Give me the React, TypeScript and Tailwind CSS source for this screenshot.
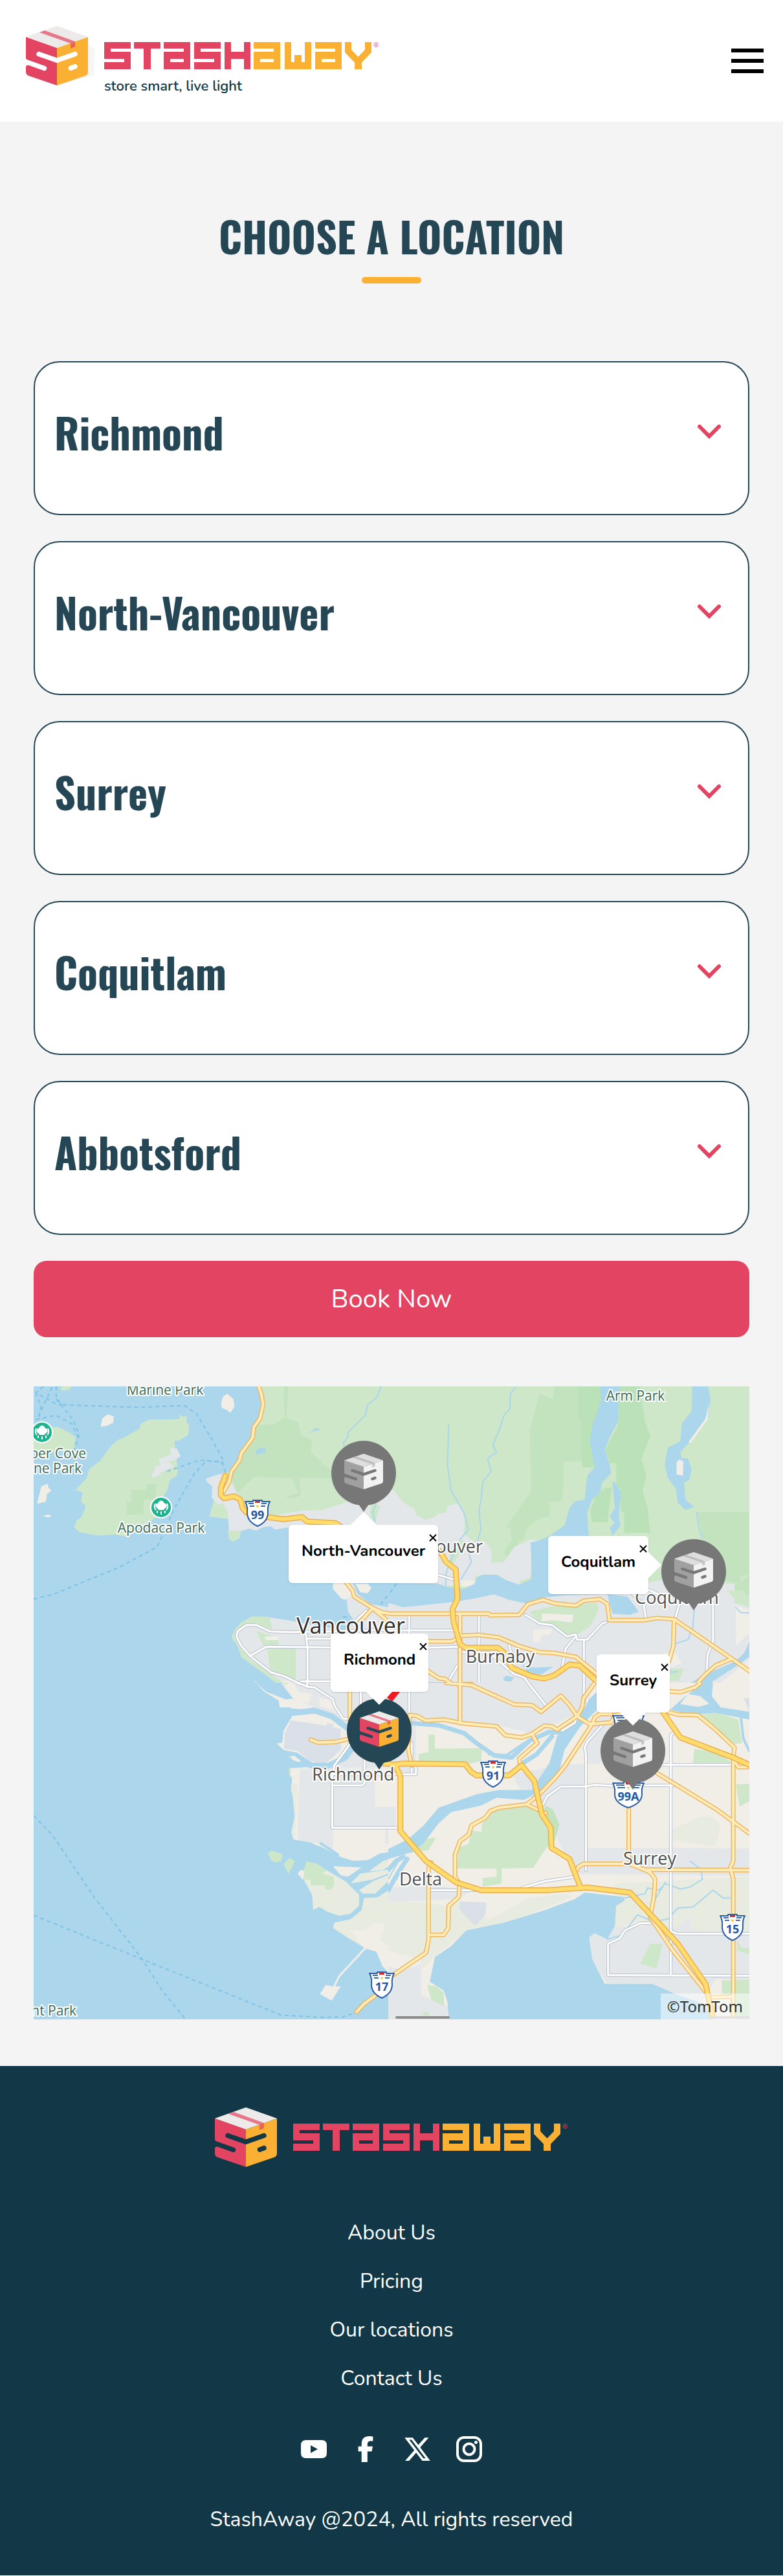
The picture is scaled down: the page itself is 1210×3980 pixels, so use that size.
import { useId, useState } from "react";
import type { ReactNode } from "react";
import { FaFacebookF, FaXTwitter } from "react-icons/fa6";

const locations = ["Richmond", "North-Vancouver", "Surrey", "Coquitlam", "Abbotsford"];
const footerLinks = ["About Us", "Pricing", "Our locations", "Contact Us"];

/* ---------- Brand ---------- */

type CubeColors = { left: string; right: string; top: string; tape: string; fold: string };

const brandCube: CubeColors = {
  left: "#e24462",
  right: "#fab033",
  top: "#edebe9",
  tape: "#e7788a",
  fold: "#ee6158",
};

const grayCube: CubeColors = {
  left: "#a0a0a0",
  right: "#f2f2f2",
  top: "#dedede",
  tape: "#bdbdbd",
  fold: "#c6c6c6",
};

function Cube({
  colors,
  gap,
  className,
  stretch,
}: {
  colors: CubeColors;
  gap: string;
  className: string;
  stretch?: boolean;
}) {
  return (
    <svg
      viewBox="0 0 96 92"
      preserveAspectRatio={stretch ? "none" : "xMidYMid meet"}
      className={className}
      aria-hidden="true"
    >
      <path d="M0 17 48 34V92L4 77Q0 75 0 71Z" fill={colors.left} />
      <path d="M96 17 48 34V92L92 77Q96 75 96 71Z" fill={colors.right} />
      <path d="M48 0 96 17 48 34 0 17Z" fill={colors.top} />
      <path d="M21 10 29 7 76 24 69 27Z" fill={colors.tape} />
      <path d="M69 27 76 24V32L69 35Z" fill={colors.fold} />
      <g fill="none" stroke={gap} strokeWidth="7.4" strokeLinecap="round">
        <path d="M20 43.5 48 53.3 76 43.5" />
        <path d="M-4 54 28.500 65.500" />
        <path d="M69.500 65.300 76 62.800" />
      </g>
      <path d="M-1 48 0 50Q.5 52 4 53.500L-1 54ZM-1 65 0 63Q.5 60 4 60.800L0 58H-1Z" fill={gap} />
    </svg>
  );
}

const markS = (x: number) => (
  <g key={`s${x}`} transform={`translate(${x} 0)`}>
    <rect width="41" height="10" />
    <rect width="10" height="26" />
    <rect y="15" width="41" height="11" />
    <rect x="31" y="15" width="10" height="27" />
    <rect y="31" width="41" height="11" />
  </g>
);

const markA = (x: number) => (
  <g key={`a${x}`} transform={`translate(${x} 0)`}>
    <rect width="41" height="10" />
    <rect x="31" width="10" height="42" />
    <rect y="15" width="41" height="11" />
    <rect y="15" width="10" height="27" />
    <rect y="31" width="41" height="11" />
  </g>
);

function Wordmark() {
  return (
    <svg viewBox="0 0 425 42" className="h-[42px] w-[425px] overflow-visible" role="img" aria-label="StashAway">
      <g fill="#e24462">
        {markS(0)}
        <rect x="46" width="41" height="10" />
        <rect x="61" width="11" height="42" />
        {markA(92)}
        {markS(139)}
        <rect x="186" width="10" height="42" />
        <rect x="216" width="10" height="42" />
        <rect x="186" y="15" width="40" height="11" />
        <text x="416" y="8" fontSize="10" fontFamily="Nunito, sans-serif">
          ®
        </text>
      </g>
      <g fill="#fab033">
        {markA(231)}
        <rect x="279" width="10" height="42" />
        <rect x="310" width="10" height="42" />
        <rect x="279" y="31" width="41" height="11" />
        <rect x="294" y="20" width="11" height="22" />
        {markA(326)}
        <rect x="387" y="29" width="11" height="13" />
        <polyline points="377,0 377,14 392.5,30 408,14 408,0" fill="none" stroke="#fab033" strokeWidth="10" />
      </g>
    </svg>
  );
}

/* ---------- Map artwork ---------- */

const WATER = "#abd6ec";
const GREEN = "#cde7c8";
const FOREST = "#c3e3be";
const URBAN = "#e3e7ea";
const BEIGE = "#f1eee8";
const FARM = "#e8ebdf";

function Areas({ fill, shapes }: { fill: string; shapes: string[] }) {
  return (
    <g fill={fill}>
      {shapes.map((points) => (
        <polygon key={points} points={points} />
      ))}
    </g>
  );
}

function Lines({
  stroke,
  width,
  dash,
  lines,
}: {
  stroke: string;
  width: number;
  dash?: string;
  lines: string[];
}) {
  return (
    <g fill="none" stroke={stroke} strokeWidth={width} strokeDasharray={dash} strokeLinejoin="round" strokeLinecap={dash ? "butt" : "round"}>
      {lines.map((points) => (
        <polyline key={points} points={points} vectorEffect="non-scaling-stroke" />
      ))}
    </g>
  );
}

function Roads({ local, main, highway }: { local: string[]; main: string[]; highway: string[] }) {
  return (
    <>
      <Lines stroke="#b7bfcb" width={5} lines={local} />
      <Lines stroke="#ffffff" width={3} lines={local} />
      <Lines stroke="#efb55c" width={7} lines={main} />
      <Lines stroke="#ffecb8" width={4} lines={main} />
      <Lines stroke="#ecac4c" width={9} lines={highway} />
      <Lines stroke="#ffdc6c" width={6} lines={highway} />
    </>
  );
}

function Tile({ x, y, w, h, view, children }: { x: number; y: number; w: number; h: number; view: string; children: ReactNode }) {
  return (
    <svg x={x} y={y} width={w} height={h} viewBox={view} preserveAspectRatio="none">
      {children}
    </svg>
  );
}

const FERRY = "#7cc3e8";

function HoweSound() {
  return (
    <Tile x={0} y={0} w={548} h={458} view="31 36 1432 1374">
      <Areas
        fill={GREEN}
        shapes={[
          "30,235 60,222 130,225 172,248 200,270 195,320 170,345 140,335 30,345",
          "135,48 150,36 182,36 178,50 150,56",
          "200,515 245,462 255,420 300,380 345,310 375,282 405,268 460,230 462,210 495,190 600,188 620,186 620,168 640,176 650,172 648,195 660,220 655,262 620,285 600,290 612,420 612,447 582,470 570,520 545,560 555,600 530,640 490,670 440,710 400,732 360,722 290,728 215,712 195,690 203,660 225,640 242,590 222,570 228,527",
          "940,36 950,70 958,120 945,185 920,225 905,280 870,340 845,395 825,430 790,440 740,640 1100,690 1463,690 1463,36",
        ]}
      />
      <Areas
        fill={FOREST}
        shapes={[
          "425,515 487,515 487,487 525,490 525,550 515,560 475,560 475,630 405,630 405,570 425,570",
          "1060,36 1050,180 1100,205 1110,260 1155,285 1150,340 1205,400 1240,435 1250,462 1105,462 1110,540 1085,555 1045,550 1100,530 1075,462 920,455 850,535 830,460 850,400 900,290 920,215 1000,212 1045,180 1040,36",
        ]}
      />
      <Areas
        fill={URBAN}
        shapes={[
          "535,375 585,350 580,318 610,325 624,360 600,378 575,385 598,408 560,425 520,460 505,452 525,405 545,402",
          "725,465 760,450 790,440 825,470 855,535 885,590 1000,635 1110,612 1200,608 1300,570 1335,560 1463,520 1463,690 1060,690 1005,700 990,685 960,688 930,705 900,695 860,710 820,708 815,620 795,575 775,585 750,550 752,500 730,478",
          "910,1103 960,1103 1060,1120 1190,1150 1290,1165 1330,1130 1300,1080 1295,1020 1275,1020 1240,975 1240,948 1320,948 1340,1000 1390,1045 1463,1060 1463,1410 1010,1410 960,1365 910,1325 870,1290 850,1225 830,1200 845,1160 870,1130",
        ]}
      />
      <Areas
        fill={GREEN}
        shapes={[
          "815,705 868,705 862,740 835,757 820,745",
          "845,1225 830,1200 845,1160 870,1130 910,1103 960,1103 985,1110 995,1165 930,1142 890,1145 852,1180 860,1220",
          "975,1255 1090,1250 1090,1395 1040,1380 985,1345",
          "930,1170 985,1190 1020,1200 1020,1235 960,1240",
          "1390,575 1430,590 1410,665 1390,650",
          "850,1225 870,1290 910,1325 960,1365 1010,1410 1040,1410 985,1365 905,1300",
        ]}
      />
      <Areas
        fill={BEIGE}
        shapes={[
          "302,222 308,185 330,166 355,175 352,205 325,220",
          "788,115 795,85 812,70 838,95 842,130 825,160 815,148 790,135",
          "45,580 62,500 88,487 90,505 103,518 85,535 80,570",
          "68,636 90,629 105,640 85,643",
          "1240,948 1290,948 1325,1000 1340,1025 1310,1010 1290,1025 1275,1020 1240,975",
          "1330,950 1380,950 1395,970 1380,995 1350,990",
          "1035,1400 1070,1400 1070,1410 1040,1410",
          "965,1195 1020,1195 1020,1212 965,1212",
          "920,1398 940,1415 932,1415",
        ]}
      />
      <Areas fill={WATER} shapes={["925,340 945,318 968,325 965,345 930,352", "1130,265 1165,232 1185,230 1183,240 1155,245"]} />
      <Lines stroke={WATER} width={2} lines={["1435,36 1415,90 1380,120 1370,170 1300,250 1298,275 1282,295 1285,315", "1420,560 1400,620 1410,665"]} />
      <Lines
        stroke={FERRY}
        width={2}
        dash="6 5"
        lines={[
          "122,36 122,95 155,122 450,133 640,125 690,165 750,280 800,385",
          "31,1022 110,1000 375,875 530,780 600,600 680,440 730,380 800,390",
          "570,430 700,378 790,385 808,440",
          "70,36 40,65 122,118 155,122",
          "105,40 45,190",
          "40,65 60,130 50,190",
          "40,190 120,170 185,210 210,270",
          "122,95 190,190 215,260 195,330",
          "1495,955 1430,1050",
          "1280,1105 1310,1105",
        ]}
      />
      <Roads
        local={[
          "1463,1165 1075,1175 985,1172 930,1142 890,1142 855,1170 850,1195 870,1240 905,1285 990,1362 1040,1378 1135,1430 1160,1432",
          "905,1285 970,1243 1463,1248",
          "1130,1180 1137,1250 1137,1430",
          "1137,1205 1463,1205",
          "1110,1403 1463,1403",
          "1375,1075 1330,1125",
        ]}
        main={[
          "938,30 950,70 958,120 945,185 920,225 915,275 870,345 862,380 830,430 820,480 798,525",
          "1290,940 1320,985 1325,1010 1395,1060 1440,1085 1480,1088",
          "1395,1070 1340,1140",
          "1395,1060 1463,1125",
          "1308,1400 1308,1420",
        ]}
        highway={["805,450 787,505 787,540 800,555 840,545 865,560 875,600 890,620 975,642 1040,652 1115,642 1135,662 1250,670 1290,700"]}
      />
    </Tile>
  );
}

function NorthShore() {
  return (
    <Tile x={548} y={0} w={558} h={458} view="0 36 1434 1374">
      <rect x="0" y="36" width="1434" height="1374" fill={GREEN} />
      <Areas
        fill={FOREST}
        shapes={[
          "660,36 655,95 600,70 562,240 568,520 520,600 465,690 485,690 490,750 465,790 462,820 500,820 515,760 540,740 550,690 605,645 640,640 640,572 693,568 697,384 830,384 860,36",
          "1228,618 1434,618 1434,912 1400,912 1395,948 1340,940 1250,745",
          "1434,912 1434,1000 1380,1030 1375,960 1395,948",
        ]}
      />
      <Areas
        fill="#bbe1b9"
        shapes={[
          "755,36 860,36 830,412 772,412 765,330 772,196 755,196",
          "915,36 1000,36 1010,130 1020,200 1042,265 1005,370 1025,455 1010,520 1030,600 1040,715 937,715 937,620 925,615 920,508 905,505 905,392 880,392 862,330 912,220",
          "865,505 887,505 870,665 810,665 802,610 830,530",
        ]}
      />
      <Areas
        fill={URBAN}
        shapes={[
          "0,515 20,515 60,575 105,605 110,630 150,655 185,640 200,625 230,620 235,590 275,578 295,600 305,640 300,720 345,760 380,752 410,795 410,855 460,850 500,780 565,745 640,760 640,960 0,960",
          "0,1000 640,1000 1000,950 1080,935 1120,920 1300,950 1375,950 1375,1040 1434,1060 1434,1410 0,1410",
        ]}
      />
      <Areas
        fill={GREEN}
        shapes={[
          "575,1100 560,1080 650,1055 740,1050 830,1038 835,1070 820,1110 800,1150 745,1190 700,1190 670,1160 600,1130",
          "345,915 400,905 375,940 345,950",
          "515,940 560,925 568,900 568,950 540,958",
          "1120,1345 1175,1345 1155,1400 1120,1400",
          "1345,985 1410,980 1434,1030 1385,1030",
          "240,800 285,745 315,760 250,870",
        ]}
      />
      <Areas
        fill={BEIGE}
        shapes={[
          "610,1088 735,1095 730,1130 650,1120 610,1125",
          "575,1165 650,1160 645,1185 605,1190 605,1220 575,1220",
          "1380,1050 1434,1075 1434,1180 1380,1240",
          "1320,1410 1385,1350 1434,1300 1434,1410",
          "1090,1270 1140,1270 1165,1320 1120,1340",
          "290,935 345,935 330,962 290,965",
        ]}
      />
      <Areas
        fill={WATER}
        shapes={[
          "0,948 200,950 230,965 300,975 345,950 350,925 375,910 430,908 470,935 520,955 568,930 568,830 565,760 600,750 640,730 700,680 720,600 740,570 780,560 790,450 820,410 800,290 810,220 845,100 842,36 920,36 915,90 912,200 880,270 860,330 880,400 885,440 850,480 840,530 810,560 790,620 795,720 820,760 880,1000 950,1010 995,1080 960,1095 890,1090 870,1000 860,1000 700,1005 620,1015 560,1045 480,1025 420,1000 340,1020 260,1035 180,1045 60,1060 0,1040",
          "1207,36 1270,36 1280,100 1270,180 1200,290 1160,340 1165,370 1190,370 1205,420 1195,470 1175,480 1180,560 1215,595 1180,608 1150,575 1142,510 1110,460 1098,400 1110,320 1160,290 1165,210 1185,180 1205,150",
          "890,475 905,490 925,530 915,640 922,680 890,730 880,690 900,670 880,640 900,600",
          "530,1325 580,1340 655,1335 610,1370 560,1370",
          "455,1390 470,1377 500,1385 490,1403 465,1403",
          "1434,1220 1434,1290 1380,1335 1280,1410 1200,1410 1260,1370 1380,1310 1415,1270",
        ]}
      />
      <Areas fill={BEIGE} shapes={["1145,385 1158,375 1172,385 1170,450 1145,445", "1275,110 1268,190 1200,300 1192,295 1260,185"]} />
      <Lines
        stroke={WATER}
        width={2}
        lines={[
          "240,215 235,400 250,520 300,620 318,700 285,745",
          "508,36 485,70 483,140 460,170 440,240 430,265 415,310 430,340 395,370 408,430 375,480 370,550 360,610 368,700 355,750",
          "1215,1070 1210,1150 1190,1210 1140,1228",
          "1225,620 1235,700 1248,740",
          "320,810 330,850 290,930",
          "265,790 230,900 228,960",
          "1380,1060 1400,1085 1434,1085",
          "1120,1360 1150,1360",
        ]}
      />
      <Lines stroke={FERRY} width={2} dash="6 5" lines={["32,950 0,1005"]} />
      <Roads
        local={[
          "83,1100 83,1410",
          "360,1100 360,1420",
          "0,1167 260,1167",
          "160,1247 280,1243",
          "545,1095 600,1135 650,1142 710,1195 745,1185 750,1210 790,1210 850,1135 865,1130",
          "745,1195 705,1250 690,1340",
          "777,1210 777,1480",
          "1290,1040 1290,1220 1268,1280 1265,1350",
          "1160,1030 1140,1110",
          "960,985 1015,1050 1022,1105",
          "200,910 262,932",
          "280,1268 400,1270 500,1370 540,1385 620,1510",
          "480,1235 495,1300",
          "275,1330 240,1400",
          "155,1415 240,1415",
          "1035,980 1075,1000",
        ]}
        main={[
          "0,1090 400,1090 405,1097 520,1095 555,1045 615,1025 660,1042 745,1052 775,1030 840,1022 870,1045 878,1120 1015,1120 1065,1110 1135,1115 1360,1295 1440,1360",
          "1135,1115 1132,1240 1115,1310",
          "290,1192 360,1188 440,1200 520,1240 600,1268 660,1272 745,1290 830,1370",
          "155,1218 255,1218 275,1200",
          "285,1090 285,1420",
          "150,1350 200,1388 225,1392 255,1418 330,1415 500,1505",
          "1360,1300 1300,1330 1260,1370 1210,1435",
          "830,1390 815,1420",
        ]}
        highway={[
          "205,800 230,850 268,885 275,1020 255,1070 260,1130 285,1230 305,1247 435,1247 460,1270 490,1340 570,1380 620,1390 660,1375 720,1325 760,1330 830,1405",
        ]}
      />
    </Tile>
  );
}

function GeorgiaStrait() {
  return (
    <Tile x={0} y={458} w={548} h={520} view="31 0 1432 1509">
      <Areas fill={URBAN} shapes={["1030,0 1045,25 1075,65 1120,90 1170,120 1240,145 1300,195 1340,220 1463,220 1463,0"]} />
      <Areas
        fill={BEIGE}
        shapes={[
          "930,0 970,40 1050,75 1085,70 1160,110 1130,120 1075,115 1065,110 1025,110 1020,80 960,38",
          "1040,0 1080,0 1100,40 1155,50 1140,95 1075,65",
          "1185,68 1240,75 1265,130 1185,105",
          "1070,115 1075,145 1165,135 1240,165 1300,220 1463,260 1463,760 1430,765 1380,795 1320,798 1240,770 1150,715 1080,702 1072,670 1085,600 1080,510 1070,480 1075,430 1062,405 1068,382 1140,378 1095,330 1040,300 1012,272 1035,268 1040,215 1075,150",
        ]}
      />
      <Areas fill="#dae0e8" shapes={["1070,168 1215,192 1215,180 1243,185 1240,200 1270,205 1272,300 1210,362 1150,352 1095,305 1042,297 1045,225"]} />
      <Areas
        fill={URBAN}
        shapes={["1107,385 1410,385 1410,555 1500,555 1500,655 1240,655 1240,750 1180,720 1097,705 1100,510", "1310,150 1463,130 1463,380 1240,380 1320,270", "1450,655 1463,655 1463,725 1450,720"]}
      />
      <Areas fill={FARM} shapes={["1072,453 1096,453 1097,505 1085,700 1072,670 1085,600"]} />
      <Lines
        stroke={WATER}
        width={9}
        lines={["1080,135 1165,125 1235,150 1300,205", "1035,315 1090,325 1150,370 1220,372 1290,335 1325,280 1330,240"]}
      />
      <Lines stroke={WATER} width={4} lines={["1140,725 1190,740 1260,780", "1190,720 1260,770"]} />
      <Areas fill={BEIGE} shapes={["1060,328 1085,328 1112,352 1095,355 1072,342"]} />
      <Areas
        fill={FARM}
        shapes={[
          "1120,845 1135,800 1215,840 1290,890 1345,950 1345,1000 1310,1035 1265,1045 1215,1025 1185,1005 1160,1018 1155,950 1125,890",
          "1365,965 1355,1020 1310,1060 1245,1075 1240,1100 1310,1150 1370,1190 1415,1205 1440,1270 1463,1300 1463,930 1420,962",
          "1310,900 1350,855 1463,838 1463,855 1400,882",
          "1345,930 1400,890 1463,862 1463,890 1410,945 1360,945",
          "1385,845 1440,800 1500,778 1500,800 1440,840",
        ]}
      />
      <Areas
        fill={BEIGE}
        shapes={[
          "1097,855 1110,838 1125,845 1120,885",
          "1240,822 1355,828 1300,870 1270,862",
          "1310,1110 1365,1190 1415,1205 1440,1270 1463,1300 1463,1180 1430,1155 1450,1080 1400,1080 1370,1110",
          "1187,1395 1210,1355 1245,1362 1272,1360 1235,1425",
        ]}
      />
      <Areas
        fill={GREEN}
        shapes={[
          "1132,800 1175,810 1215,840 1195,855 1243,870 1243,910 1230,928 1208,925 1208,908 1150,908 1150,885 1125,880 1122,855",
          "976,765 990,752 1037,768 1030,800 1005,805 990,795",
          "1041,812 1065,785 1086,800 1060,857",
          "1060,385 1070,380 1066,430",
          "1058,330 1072,328 1075,342",
          "1035,0 1060,0 1050,8",
        ]}
      />
      <Lines stroke={BEIGE} width={3} lines={["1370,1190 1265,1315 1245,1360"]} />
      <Lines
        stroke={FERRY}
        width={2}
        dash="6 5"
        lines={["31,595 105,680 275,960 470,1240 550,1380 645,1509", "31,1042 470,1240 1030,1490 1200,1500 1280,1498 1330,1480"]}
      />
      <Roads
        local={[
          "1095,0 1140,18 1165,20 1240,75 1245,100 1280,160 1310,162",
          "1352,0 1352,165",
          "1135,0 1135,18",
          "1367,345 1367,450 1355,460 1237,460",
          "1310,270 1285,310 1245,370 1237,410 1237,650 1500,650",
          "1237,410 1500,410",
        ]}
        main={["1308,0 1308,190", "1150,255 1180,268 1250,265 1310,250", "1335,1475 1365,1440 1420,1395"]}
        highway={["1440,360 1480,365"]}
      />
    </Tile>
  );
}

function FraserValley() {
  return (
    <Tile x={548} y={458} w={558} h={520} view="0 0 1434 1509">
      <rect width="1434" height="1509" fill={BEIGE} />
      <Areas
        fill={URBAN}
        shapes={[
          "0,0 830,0 760,130 640,200 580,230 430,190 110,150 110,390 60,410 0,380",
          "490,410 700,365 780,365 780,740 690,740 650,650 600,540 520,470",
          "690,740 1434,742 1434,865 740,858",
          "0,555 30,555 30,640 0,650",
          "800,1130 900,1080 960,1100 1434,1000 1434,1330 1300,1330 1240,1440 1050,1350 870,1350 810,1250",
          "0,920 160,900 330,935 270,970 0,985",
          "840,140 900,140 900,240 840,365 780,365 780,280",
          "0,1270 60,1290 130,1260 130,1400 235,1450 235,1509 0,1509",
        ]}
      />
      <Areas
        fill={FARM}
        shapes={[
          "0,980 130,985 240,1000 290,980 400,1060 560,965 700,945 730,960 600,1020 460,1075 320,1105 260,1160 200,1210 130,1290 130,1240 0,1200",
          "900,900 1434,870 1434,1120 1200,1110 1200,1040 1150,1100 1000,1070 900,1100",
          "1130,655 1240,600 1290,600 1320,640 1300,735 1210,720 1130,705",
        ]}
      />
      <Areas
        fill={GREEN}
        shapes={[
          "330,660 370,670 372,630 400,600 430,560 550,550 610,590 650,710 615,760 575,830 450,832 450,900 375,915 375,875 430,870 430,832 272,832 280,740 320,720",
          "1005,1250 1040,1170 1090,1170 1065,1280 1035,1270 1000,1260",
          "1235,145 1310,135 1390,165 1405,270 1370,275 1310,230",
          "1215,297 1300,310 1370,360 1210,360",
          "155,1355 190,1360 220,1390 222,1450 170,1420",
          "120,320 160,310 160,232 185,232 185,295 370,293 370,350 285,372 120,372",
          "75,765 130,705 190,692 160,750",
          "1380,455 1434,453 1434,530 1395,555",
          "1325,1335 1434,1330 1434,1509 1380,1509 1380,1395 1325,1395",
          "1385,1155 1405,1190 1434,1190 1434,1215 1385,1200",
          "140,1475 162,1475 162,1492 140,1492",
        ]}
      />
      <Areas fill={FOREST} shapes={["625,550 655,570 680,635 660,710 645,710 640,640 612,590"]} />
      <Areas fill="#dae0e8" shapes={["283,980 390,985 385,1040 345,1090 310,1050 283,1015", "1413,70 1434,70 1434,130"]} />
      <Areas
        fill={WATER}
        shapes={[
          "780,940 930,960 940,975 905,1000 900,1090 870,1150 820,1122 798,1140 810,1240 860,1350 1050,1350 1130,1390 1250,1440 1290,1509 240,1509 235,1430 220,1380 165,1340 185,1230 250,1180 310,1110 460,1075 620,1020 740,970",
          "0,745 80,700 140,640 200,560 350,500 440,480 570,480 640,360 670,240 760,150 800,70 830,40 830,120 760,200 700,300 680,390 610,480 540,525 430,515 370,550 250,580 200,630 140,720 90,760 0,790",
          "1120,120 1180,60 1250,0 1290,0 1285,60 1320,110 1434,130 1434,165 1300,135 1200,145",
        ]}
      />
      <Areas fill={BEIGE} shapes={["1160,95 1190,50 1240,60 1275,95 1230,108"]} />
      <Lines
        stroke={WATER}
        width={7}
        lines={["80,180 200,190 300,225 350,270 420,325 490,335 560,260 640,220 700,225", "0,930 40,850 75,790", "520,370 590,320 650,240", "0,840 30,800 60,780"]}
      />
      <Lines stroke={WATER} width={4} lines={["1400,150 1410,250 1434,305", "400,320 470,325 540,270"]} />
      <Lines
        stroke={WATER}
        width={2}
        lines={[
          "900,965 940,965 1020,945 1030,920 1075,930 1100,900 1160,925 1200,915 1248,880 1240,835 1200,800",
          "870,1150 930,1130 990,1040 1050,1070 1110,1060 1150,1010 1210,1005 1290,930 1330,965 1360,965",
          "0,880 40,800",
          "1060,970 1100,895",
        ]}
      />
      <Roads
        local={[
          "83,0 83,150",
          "110,370 110,410 0,410",
          "93,270 93,400",
          "0,650 45,650",
          "777,0 777,90",
          "785,840 785,320 780,290 790,265 850,190",
          "690,215 740,180 750,150",
          "1122,1310 1122,235 1130,225",
          "1085,368 1370,368",
          "615,545 630,510 685,465 780,465 820,457 890,462",
          "1015,460 1140,460",
          "165,930 380,930",
          "530,920 620,890 740,870",
          "1040,1078 1000,1078 940,1110 920,1145 873,1170 873,1310 1434,1314",
          "1122,1115 1150,1125 1434,1125",
          "555,0 625,100",
        ]}
        main={[
          "85,145 110,147 150,170 220,165 300,182 430,195 465,235 530,245 570,230 620,192 650,195 670,210 750,150",
          "285,0 285,180",
          "230,0 330,10 500,97 570,100 607,130 685,58 720,100 750,150 800,185 885,178 900,145 950,135",
          "820,0 775,70 770,110 750,150",
          "85,145 80,300 93,370",
          "570,230 592,270 550,310 520,340 525,370",
          "885,140 840,140 820,155 810,185 700,375 660,430 600,500 550,545 440,560 405,575 385,605 330,640 320,680 285,710 265,770 265,870 283,900 280,960 240,1000 238,1100 220,1130 165,1130",
          "170,805 160,830 160,1150 150,1210 0,1325",
          "550,545 625,585",
          "955,560 955,780 1000,830 1040,850 1060,880 1055,960 1040,1050 1130,1200 1250,1370 1275,1410 1365,1407",
          "740,860 755,825 775,812 955,812 1020,838 1434,840",
          "1060,400 1300,565 1434,675",
          "1370,340 1370,800 1358,830 1370,880 1370,1495",
          "1115,132 1150,142 1230,145 1300,210 1375,290 1370,340 1390,378 1434,378",
          "1115,38 1160,42 1220,20 1240,0",
        ]}
        highway={[
          "0,362 20,368 60,362 305,365 330,400 350,415 480,415 530,370 580,440 610,590 645,650 648,740 720,790 740,850 765,920",
          "30,375 48,420 48,665 150,800 270,895 370,930 630,930 790,918 960,940 1150,1170 1260,1350 1290,1509",
          "1090,130 1160,245 1370,335 1434,368",
        ]}
      />
    </Tile>
  );
}

function Shield({ x, y, label, wide }: { x: number; y: number; label?: string; wide?: boolean }) {
  const half = wide ? 24 : 19;
  return (
    <g transform={`translate(${x} ${y})`}>
      <path
        d={`M${-half} 3H-7V1H7V3H${half}Q${half - 4} 10 ${half - 3} 20Q${half - 3} 34 0 41Q${3 - half} 34 ${3 - half} 20Q${4 - half} 10 ${-half} 3Z`}
        fill="#ffffff"
        stroke="#2a5caa"
        strokeWidth="2"
        strokeLinejoin="round"
      />
      <path d={`M${5 - half} 6H-6M${7 - half} 10H-5M${half - 5} 6H6M${half - 7} 10H5`} stroke="#3c68b0" strokeWidth="2" />
      <rect x="-4" y="2" width="8" height="3" fill="#d9302f" />
      <path d="M-2.500 9H2.500L0 13Z" fill="#f7c531" />
      {label && (
        <text y="30" textAnchor="middle" className="text-[18px] font-bold" fill="#1f57a8">
          {label}
        </text>
      )}
    </g>
  );
}

function ParkBadge({ x, y }: { x: number; y: number }) {
  return (
    <g transform={`translate(${x} ${y})`}>
      <circle r="17" fill="#ffffff" />
      <circle r="15" fill="#20b18f" />
      <g fill="#ffffff">
        <circle cy="-6" r="4.500" />
        <circle cx="-4.500" cy="-2.500" r="4" />
        <circle cx="4.500" cy="-2.500" r="4" />
        <rect x="-5" y="-3" width="10" height="7" rx="2" />
      </g>
      <path d="M-6 5V9M0 6V11M6 5V9M-9 -6Q-12 0 -8 4M9 -6Q12 0 8 4" stroke="#ffffff" strokeWidth="2" fill="none" />
    </g>
  );
}

type Label = { text: string; x: number; y: number; anchor?: "end" };

const parkLabels: Label[] = [
  { text: "Marine Park", x: 203, y: 13 },
  { text: "Arm Park", x: 930, y: 22 },
  { text: "per Cove", x: 81, y: 111, anchor: "end" },
  { text: "ine Park", x: 74, y: 134, anchor: "end" },
  { text: "Apodaca Park", x: 197, y: 226 },
  { text: "nt Park", x: 66, y: 972, anchor: "end" },
];

const cityLabels: Label[] = [
  { text: "ouver", x: 694, y: 257, anchor: "end" },
  { text: "Burnaby", x: 721, y: 427 },
  { text: "Coquitlam", x: 994, y: 336 },
  { text: "Richmond", x: 494, y: 609 },
  { text: "Delta", x: 598, y: 771 },
  { text: "Surrey", x: 952, y: 739 },
];

function MapArtwork() {
  return (
    <svg viewBox="0 0 1106 978" className="block h-full w-full font-['Open_Sans',sans-serif]" role="img" aria-label="Map of Metro Vancouver">
      <rect width="1106" height="978" fill={WATER} />
      <HoweSound />
      <NorthShore />
      <GeorgiaStrait />
      <FraserValley />
      <Shield x={346} y={175} label="99" />
      <Shield x={710} y={578} label="91" />
      <Shield x={919} y={506} wide />
      <Shield x={919} y={610} label="99A" wide />
      <Shield x={1080} y={815} label="15" />
      <Shield x={538} y={904} label="17" />
      <ParkBadge x={13} y={71} />
      <ParkBadge x={197} y={187} />
      <g stroke="#ffffff" strokeWidth="4" strokeLinejoin="round" className="[paint-order:stroke]">
        <g className="text-[21px]" fill="#3a6b58">
          {parkLabels.map((l) => (
            <text key={l.text} x={l.x} y={l.y} textAnchor={l.anchor ?? "middle"}>
              {l.text}
            </text>
          ))}
        </g>
        <g className="text-[27px]" fill="#505050">
          {cityLabels.map((l) => (
            <text key={l.text} x={l.x} y={l.y} textAnchor={l.anchor ?? "middle"}>
              {l.text}
            </text>
          ))}
        </g>
        <text x="490" y="382" textAnchor="middle" className="text-[34px] font-medium" fill="#2d2d2d">
          Vancouver
        </text>
      </g>
      <path d="M546 481 553 472H566L554 487Z" fill="#ee1c24" />
      <rect x="559" y="973" width="84" height="4" rx="2" fill="#8d8d8d" />
      <rect x="1046" y="973" width="70" height="4" rx="2" fill="#c6c6c6" />
    </svg>
  );
}

/* ---------- Map overlays ---------- */

function Pin({ label, active, className }: { label: string; active?: boolean; className: string }) {
  const color = active ? "#244655" : "#777777";
  return (
    <button type="button" aria-label={`${label} location`} className={`absolute h-[110px] w-[100px] ${className}`}>
      <svg viewBox="0 0 100 110" className="absolute inset-0 h-full w-full" aria-hidden="true">
        <circle cx="50" cy="50" r="50" fill={color} />
        <path d="M37 90H63L58 98 50 110 42 98Z" fill={color} />
      </svg>
      <Cube colors={active ? brandCube : grayCube} gap={color} stretch className="absolute top-5 left-5 h-[55px] w-[60px]" />
    </button>
  );
}

const tips = {
  up: "M0 20 20 0 40 20Z",
  down: "M0 0 20 20 40 0Z",
  right: "M0 0 20 20 0 40Z",
};

function Popup({ label, tip, className, tipClassName }: { label: string; tip: keyof typeof tips; className: string; tipClassName: string }) {
  const [open, setOpen] = useState(true);
  if (!open) return null;
  return (
    <div className={`absolute h-[90px] rounded-md bg-white px-5 pt-5 shadow-sm ${className}`}>
      <svg
        viewBox={tip === "right" ? "0 0 20 40" : "0 0 40 20"}
        className={`absolute ${tip === "right" ? "h-10 w-5" : "h-5 w-10"} ${tipClassName}`}
        aria-hidden="true"
      >
        <path d={tips[tip]} fill="#ffffff" />
      </svg>
      <p className="text-center text-2xl leading-10 font-bold whitespace-nowrap text-black">{label}</p>
      <button type="button" aria-label={`Close ${label}`} onClick={() => setOpen(false)} className="absolute top-3 right-0 flex h-4 w-4 items-center justify-center">
        <svg viewBox="0 0 12 12" className="h-3 w-3" aria-hidden="true">
          <path d="M1 1 11 11M11 1 1 11" stroke="#000000" strokeWidth="2" />
        </svg>
      </button>
    </div>
  );
}

function LocationsMap() {
  return (
    <section aria-label="Locations map" className="mt-[76px] flex justify-center overflow-hidden bg-[#abd6ec]">
      <div className="relative h-[978px] w-[1106px] shrink-0 overflow-hidden">
        <MapArtwork />
        <Pin label="North-Vancouver" className="top-[84px] left-[460px]" />
        <Pin label="Coquitlam" className="top-[236px] left-[970px]" />
        <Pin label="Surrey" className="top-[513px] left-[876px]" />
        <Pin label="Richmond" active className="top-[482px] left-[484px]" />
        <Popup label="North-Vancouver" tip="up" className="top-[214px] left-[394px]" tipClassName="-top-5 left-24" />
        <Popup label="Coquitlam" tip="right" className="top-[231px] left-[795px]" tipClassName="top-[25px] left-full" />
        <Popup label="Surrey" tip="down" className="top-[414px] left-[870px]" tipClassName="top-full left-9" />
        <Popup label="Richmond" tip="down" className="top-[382px] left-[459px]" tipClassName="top-full left-[55px]" />
        <a href="#tomtom" className="absolute right-0 bottom-0 bg-white/50 px-2.5 font-['Noto_Sans',sans-serif] text-2xl leading-10 font-normal text-[#333333]">
          ©TomTom
        </a>
      </div>
    </section>
  );
}

/* ---------- Page ---------- */

function LocationCard({ name }: { name: string }) {
  const [open, setOpen] = useState(false);
  const panelId = useId();
  return (
    <li className="rounded-[40px] border-2 border-[#244655] bg-white px-[30px] pt-[59px] pb-[79px]">
      <h2>
        <button
          type="button"
          aria-expanded={open}
          aria-controls={panelId}
          onClick={() => setOpen(!open)}
          className="flex w-full items-center justify-between font-['Oswald',sans-serif] text-[64px] leading-24 font-bold text-[#244655]"
        >
          {name}
          <svg viewBox="0 0 36 22" className={`mr-3 h-[22px] w-9 ${open ? "rotate-180" : ""}`} aria-hidden="true">
            <path d="M3 3 18 18 33 3" fill="none" stroke="#e24462" strokeWidth="6" strokeLinecap="round" />
          </svg>
        </button>
      </h2>
      <div id={panelId} hidden={!open} className="pt-4 text-3xl text-[#244655]">
        StashAway {name}
      </div>
    </li>
  );
}

export default function App() {
  return (
    <div className="bg-[#f4f4f4] font-['Nunito',sans-serif]">
      <header className="flex items-start justify-between bg-white pt-10 pr-[30px] pb-[41px] pl-10">
        <a href="#home" className="flex gap-[25px]">
          <div className="relative h-[92px]">
            <svg viewBox="0 0 110 92" className="absolute top-0 left-0 h-[92px] w-[110px]" aria-hidden="true">
              <path d="M96 28 107 36 105 76 48 92Z" fill="#f6f6f7" />
            </svg>
            <Cube colors={brandCube} gap="#ffffff" className="relative h-[92px] w-24" />
          </div>
          <div className="pt-[25px]">
            <Wordmark />
            <p className="mt-3 text-[22px] leading-7 font-semibold text-[#123746]">store smart, live light</p>
          </div>
        </a>
        <button type="button" aria-label="Open menu" className="mt-[35px] flex w-[50px] flex-col gap-[10px]">
          <span className="h-1.5 bg-black" />
          <span className="h-1.5 bg-black" />
          <span className="h-1.5 bg-black" />
        </button>
      </header>

      <main className="px-[52px] pt-32 pb-[72px]">
        <h1 className="text-center font-['Oswald',sans-serif] text-[64px] leading-24 font-bold text-[#244655]">CHOOSE A LOCATION</h1>
        <div className="mx-auto mt-4 h-2.5 w-[92px] rounded-full bg-[#fab033]" />
        <ul className="mt-[120px] flex flex-col gap-10">
          {locations.map((name) => (
            <LocationCard key={name} name={name} />
          ))}
        </ul>
        <button type="button" className="mt-10 block w-full rounded-[20px] bg-[#e24462] py-8 text-[40px] leading-[54px] text-white">
          Book Now
        </button>
        <LocationsMap />
      </main>

      <footer className="flex flex-col items-center bg-[#123746] pt-16 pb-[65px] text-[32px] leading-[43px] text-white">
        <a href="#home" className="flex items-start gap-[25px]">
          <Cube colors={brandCube} gap="#123746" className="h-[92px] w-24" />
          <div className="pt-[25px]">
            <Wordmark />
          </div>
        </a>
        <nav aria-label="Footer" className="mt-20 flex flex-col items-center gap-8">
          {footerLinks.map((link) => (
            <a key={link} href="#footer">
              {link}
            </a>
          ))}
        </nav>
        <div className="mt-[68px] flex gap-10">
          <a href="#youtube" aria-label="YouTube" className="flex h-10 w-10 items-center justify-center">
            <svg viewBox="0 0 40 28" className="h-7 w-10" aria-hidden="true">
              <path fillRule="evenodd" fill="#ffffff" d="M8 0H32Q40 0 40 8V20Q40 28 32 28H8Q0 28 0 20V8Q0 0 8 0ZM15 8V20L26 14Z" />
            </svg>
          </a>
          <a href="#facebook" aria-label="Facebook" className="flex h-10 w-10 items-center justify-center">
            <FaFacebookF className="h-10 w-10" />
          </a>
          <a href="#x" aria-label="X" className="flex h-10 w-10 items-center justify-center">
            <FaXTwitter className="h-11 w-11 shrink-0" />
          </a>
          <a href="#instagram" aria-label="Instagram" className="flex h-10 w-10 items-center justify-center">
            <svg viewBox="0 0 40 40" className="h-10 w-10" fill="none" stroke="#ffffff" strokeWidth="4" aria-hidden="true">
              <rect x="2" y="2" width="36" height="36" rx="10" />
              <circle cx="20" cy="20" r="8.500" />
              <circle cx="30.500" cy="9.500" r="2.500" fill="#ffffff" stroke="none" />
            </svg>
          </a>
        </div>
        <p className="mt-[67px]">StashAway @2024, All rights reserved</p>
      </footer>
    </div>
  );
}
